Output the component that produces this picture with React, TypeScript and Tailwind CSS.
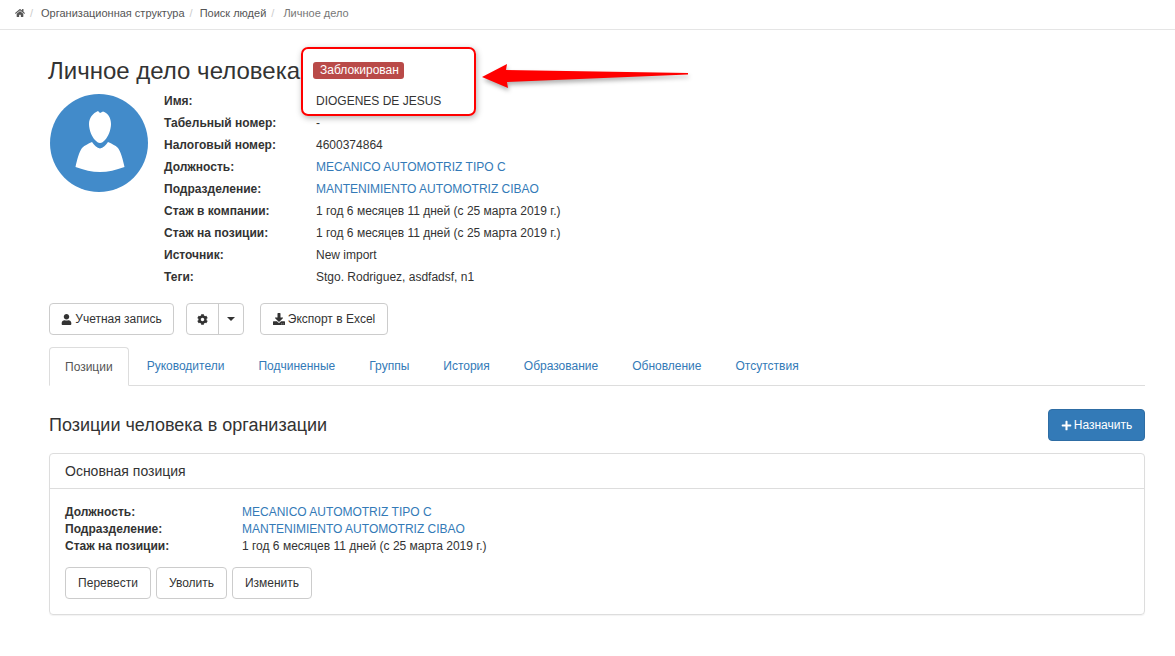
import React from "react";
import { FaHome, FaUser, FaCog, FaDownload, FaPlus } from "react-icons/fa";

const rows: [string, string, boolean][] = [
  ["Табельный номер:", "-", false],
  ["Налоговый номер:", "4600374864", false],
  ["Должность:", "MECANICO AUTOMOTRIZ TIPO C", true],
  ["Подразделение:", "MANTENIMIENTO AUTOMOTRIZ CIBAO", true],
  ["Стаж в компании:", "1 год 6 месяцев 11 дней (с 25 марта 2019 г.)", false],
  ["Стаж на позиции:", "1 год 6 месяцев 11 дней (с 25 марта 2019 г.)", false],
  ["Источник:", "New import", false],
  ["Теги:", "Stgo. Rodriguez, asdfadsf, n1", false],
];

const tabs = ["Руководители", "Подчиненные", "Группы", "История", "Образование", "Обновление", "Отсутствия"];

const btn = "h-8 flex items-center justify-center gap-[3px] bg-white border border-[#ccc] rounded text-[#333]";

function Avatar() {
  return (
    <svg width="98" height="98" viewBox="0 0 98 98" className="shrink-0">
      <circle cx="49" cy="49" r="49" fill="#428bca" />
      <path
        d="M48 17 L50 19 L53 17.5 C58 19 61 24 61 30 C61 36 58 43 55 46 C53 48 52 49 50 49 C48 49 47 48 45 46 C42 43 39 36 39 30 C39 24 43 19 48 17 Z"
        fill="#fff"
      />
      <path
        d="M42 48 C44 51 47 54 50 54.500 C53 54 56 51 58 48 C62 50 65 51 68 54 C71 58 73 66 74.500 73 C66 76 58 78 50 78 C42 78 34 76 25.500 73 C27 66 29 58 32 54 C35 51 38 50 42 48 Z"
        fill="#fff"
      />
    </svg>
  );
}

function Annotation() {
  return (
    <>
      <div className="absolute left-[301px] top-[47px] w-[175px] h-[69px] border-2 border-[#f00] rounded-[7px] shadow-[1px_2px_6px_rgba(0,0,0,0.3)] pointer-events-none" />
      <svg className="absolute left-[480px] top-[60px] drop-shadow-[1px_3px_2px_rgba(0,0,0,0.3)]" width="214" height="36" viewBox="0 0 214 36">
        <path d="M2 17 L27 4 L26 10 L208 13 L208 14.500 L27 22 L28 28 Z" fill="#f00" />
      </svg>
    </>
  );
}

export default function App() {
  return (
    <div className="relative w-[1175px] h-[656px] overflow-hidden bg-white text-[#333] text-[12px] font-['Liberation_Sans',Arial,sans-serif]">
      <div className="h-[30px] border-b border-[#e5e5e5] pl-[15px] flex items-center gap-[5px] text-[#555] text-[11px] pb-[3px]">
        <FaHome className="text-[10px] text-[#555]" />
        <span className="text-[#ccc]">/</span>
        <span className="ml-[3px]">Организационная структура</span>
        <span className="text-[#ccc]">/</span>
        <span className="ml-[2px]">Поиск людей</span>
        <span className="text-[#ccc]">/</span>
        <span className="ml-[4px] text-[#777]">Личное дело</span>
      </div>

      <div className="pl-[49px] pr-[30px]">
        <div className="flex items-center h-[30px] mt-[26px] -ml-[1px]">
          <h1 className="text-[24px] leading-[30px] text-[#333] font-normal w-[265px] whitespace-nowrap">Личное дело человека</h1>
          <span className="-mt-[1px] h-[17px] w-[91px] pl-[7px] rounded-[3px] bg-[#b94a48] text-white text-[12px] leading-[17px] whitespace-nowrap">Заблокирован</span>
        </div>

        <div className="flex mt-[4px] pl-[1px]">
          <div className="pt-[4px] w-[114px] shrink-0">
            <Avatar />
          </div>
          <div className="flex flex-col">
            <div className="flex h-[22px] items-center">
              <b className="w-[152px]">Имя:</b>
              <span>DIOGENES DE JESUS</span>
            </div>
            {rows.map(([label, value, link]) => (
              <div key={label} className="flex h-[22px] items-center">
                <b className="w-[152px]">{label}</b>
                <span className={link ? "text-[#337ab7]" : ""}>{value}</span>
              </div>
            ))}
          </div>
        </div>

        <div className="flex mt-[15px]">
          <div className={`${btn} w-[125px]`}>
            <FaUser className="text-[11px]" />
            <span>Учетная запись</span>
          </div>
          <div className="ml-[12px] h-8 w-[58px] flex bg-white border border-[#ccc] rounded">
            <div className="w-[32px] flex items-center justify-center border-r border-[#ccc]">
              <FaCog className="text-[11px]" />
            </div>
            <div className="flex-1 flex items-center justify-center">
              <span className="w-0 h-0 border-x-[4px] border-x-transparent border-t-[4px] border-t-[#333]" />
            </div>
          </div>
          <div className={`${btn} ml-[16px] w-[128px]`}>
            <FaDownload className="text-[12px]" />
            <span>Экспорт в Excel</span>
          </div>
        </div>

        <div className="flex h-[39px] mt-[12px] border-b border-[#ddd]">
          <div className="h-[39px] px-[15px] flex items-center border border-[#ddd] border-b-white rounded-t bg-white text-[#555]">Позиции</div>
          {tabs.map((t) => (
            <div key={t} className="h-[38px] px-[16px] ml-[2px] flex items-center text-[#337ab7]">{t}</div>
          ))}
        </div>

        <div className="flex justify-between items-center mt-[23px]">
          <h3 className="text-[18px] leading-[32px] font-normal -mt-[1px]">Позиции человека в организации</h3>
          <div className="h-8 w-[97px] flex items-center justify-center gap-[2px] rounded bg-[#337ab7] border border-[#2e6da4] text-white">
            <FaPlus className="text-[11px]" />
            <span>Назначить</span>
          </div>
        </div>

        <div className="mt-[12px] h-[162px] border border-[#ddd] rounded shadow-[0_1px_1px_rgba(0,0,0,0.05)]">
          <div className="h-[35px] border-b border-[#ddd] px-[15px] flex items-center text-[14px]">Основная позиция</div>
          <div className="px-[15px] pt-[14px]">
            <div className="grid grid-cols-[177px_1fr] auto-rows-[17px] items-center">
              <b>Должность:</b>
              <span className="text-[#337ab7]">MECANICO AUTOMOTRIZ TIPO C</span>
              <b>Подразделение:</b>
              <span className="text-[#337ab7]">MANTENIMIENTO AUTOMOTRIZ CIBAO</span>
              <b>Стаж на позиции:</b>
              <span>1 год 6 месяцев 11 дней (с 25 марта 2019 г.)</span>
            </div>
            <div className="flex gap-[5px] mt-[13px]">
              <div className={`${btn} w-[86px]`}>Перевести</div>
              <div className={`${btn} w-[71px]`}>Уволить</div>
              <div className={`${btn} w-[80px]`}>Изменить</div>
            </div>
          </div>
        </div>
      </div>

      <Annotation />
    </div>
  );
}
